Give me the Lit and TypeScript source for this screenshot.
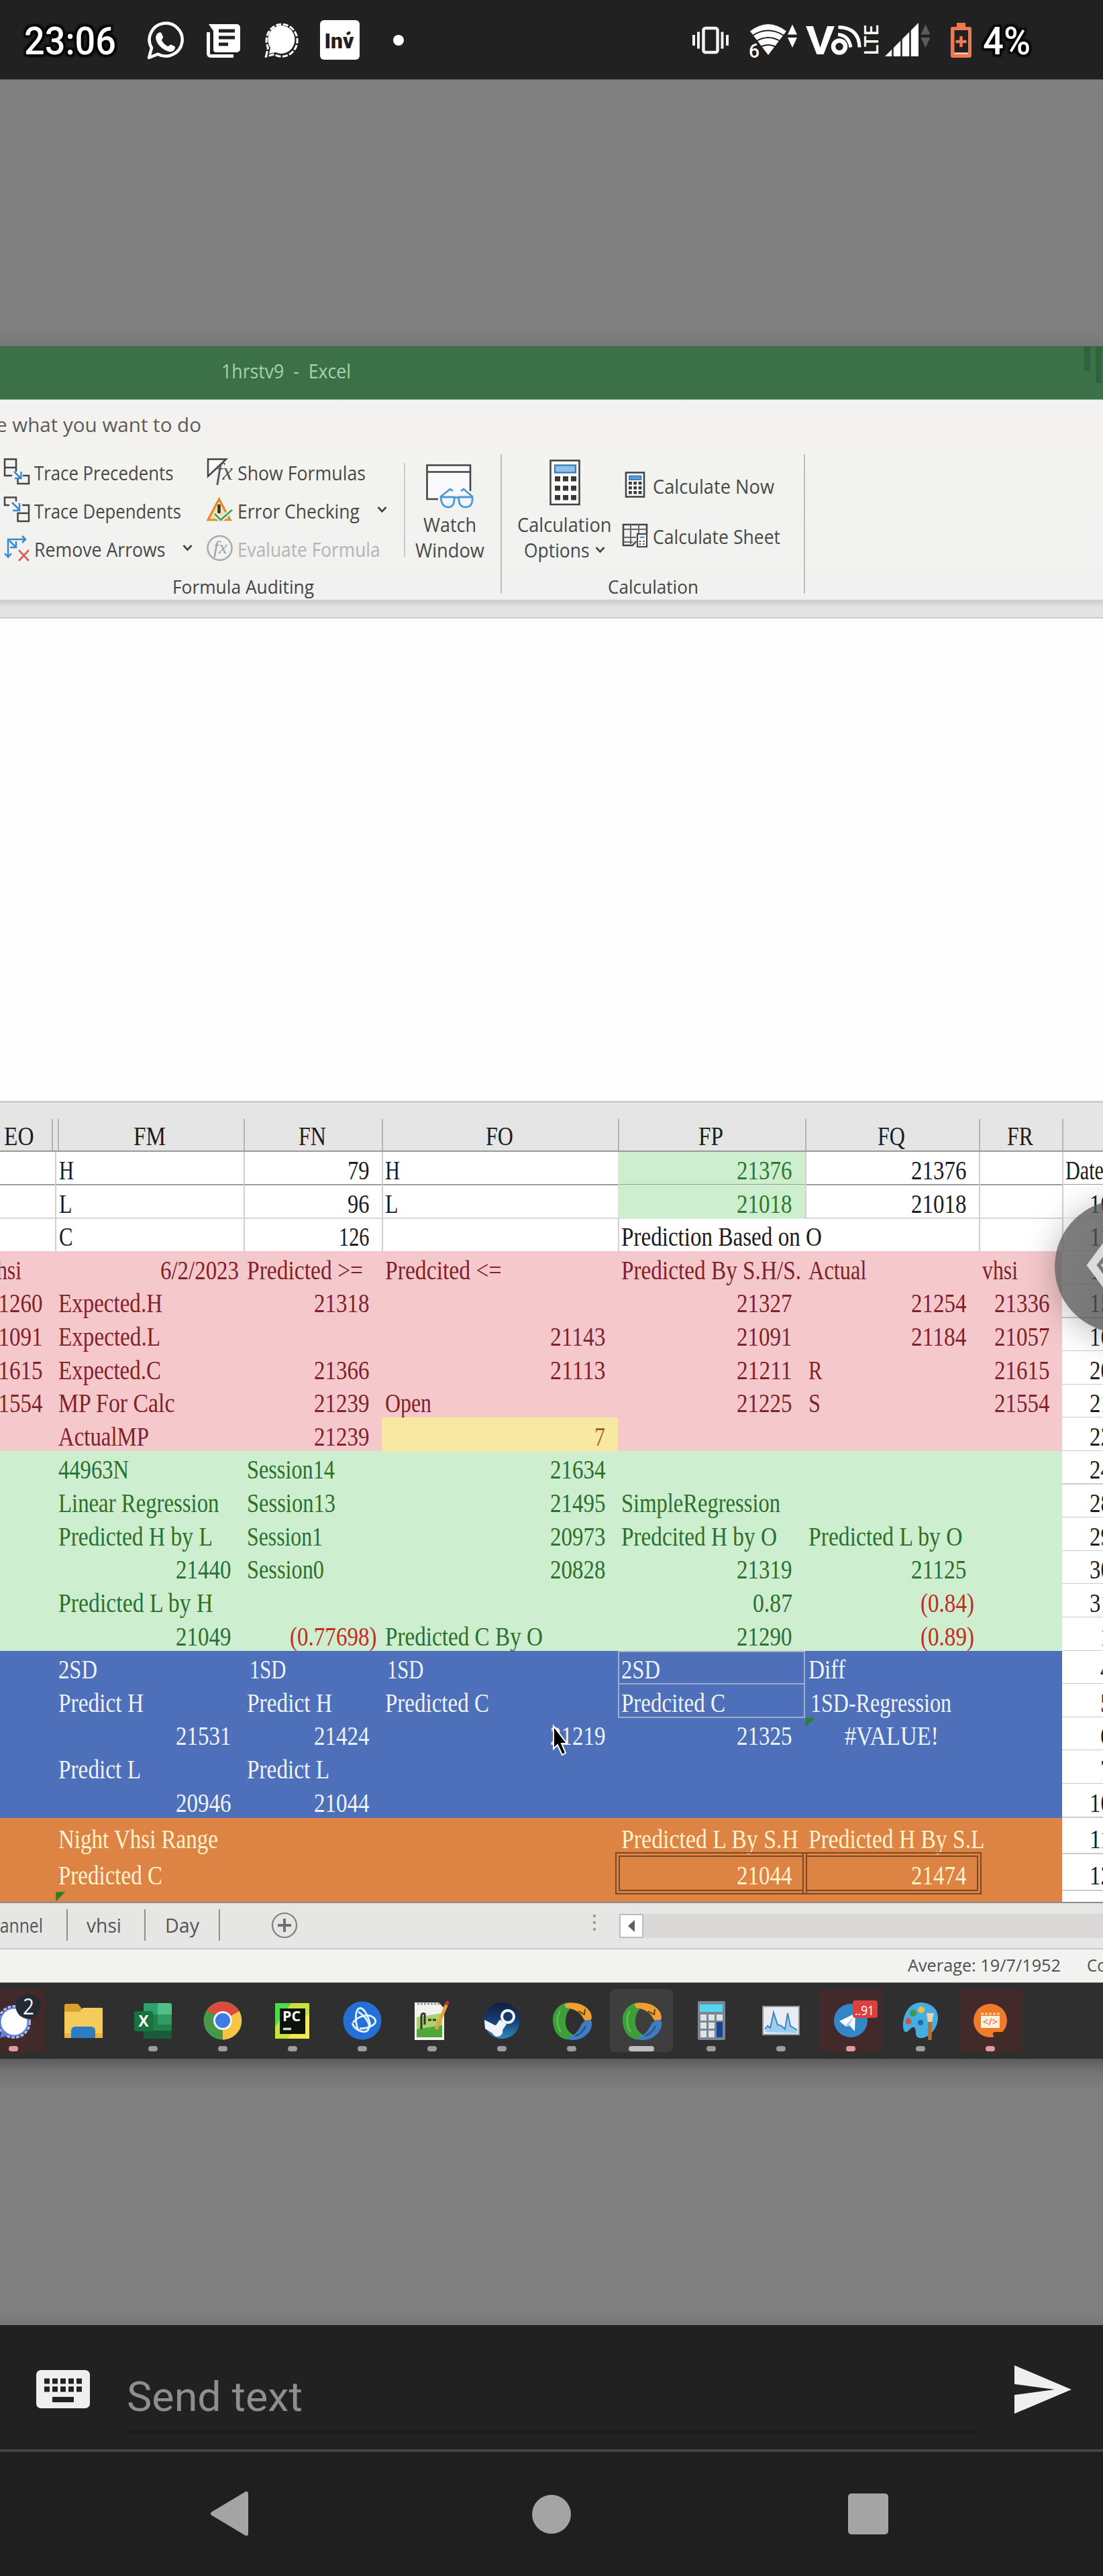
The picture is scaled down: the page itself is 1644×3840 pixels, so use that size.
import { LitElement, html, css, svg, nothing } from "lit";
import { customElement, property } from "lit/decorators.js";
import { classMap } from "lit/directives/class-map.js";

/** A run of text scaled horizontally to an exact width. */
@customElement("fit-text")
class FitText extends LitElement {
  @property() text = "";
  @property({ type: Number }) w = 0;

  static styles = css`
    :host { display: inline-block; flex: none; white-space: pre; }
    span { display: inline-block; transform-origin: 0 50%; }
  `;

  updated() {
    this.style.width = `${this.w}px`;
    const s = this.shadowRoot!.querySelector("span")!;
    s.style.transform = "none";
    const natural = s.getBoundingClientRect().width;
    if (natural) s.style.transform = `scaleX(${this.w / natural})`;
  }

  render() {
    return html`<span>${this.text}</span>`;
  }
}

const t = (text: string, w: number) => html`<fit-text .text=${text} .w=${w}></fit-text>`;

const pic = (x: number, y: number, w: number, h: number, body: unknown) =>
  html`<svg viewBox="${x} ${y} ${w} ${h}" width=${w} height=${h}>${body}</svg>`;

/* ---------- status bar icons ---------- */

const whatsapp = pic(219, 34, 55, 55, svg`
  <path d="M222 86l4-14.500a24.500 24.500 0 1 1 9.500 9.200z" fill="none" stroke="#fff" stroke-width="4.500" stroke-linejoin="round"/>
  <path d="M236 49c2-1.500 4-1 5 1l2 5c.5 2-2 3.500-2 5 2 4 5 7 9 9 2 0 3-3 5-2.500l5 2.500c2 1 1 4-1 6-3 3-7 2.500-11 .5-7-3-13-9-15-15-1.500-4-1-9 3-11.500z" fill="#fff"/>`);
const news = pic(308, 35, 51, 52, svg`
  <path d="M311 36h42a5 5 0 0 1 5 5v32a5 5 0 0 1-5 5h-31a4 4 0 0 1-4-4V46z" fill="#fff"/>
  <path d="M326 46h24M326 56h24M326 66h14" stroke="#212121" stroke-width="5"/>
  <path d="M310.500 48v32a3.500 3.500 0 0 0 3.500 3.500h34" fill="none" stroke="#fff" stroke-width="5"/>`);
const signalChat = pic(394, 35, 52, 52, svg`
  <path d="M401 80l2-9a20 21 0 1 1 8 7z" fill="#fff"/>
  <path d="M396.500 84l3-13a23 24 0 1 1 9 10z" fill="none" stroke="#fff" stroke-width="3" stroke-dasharray="8 2.500"/>`);
const inv = pic(477, 30, 59, 59, svg`
  <rect x="477" y="30" width="59" height="59" rx="6" fill="#fff"/>
  <text x="483.500" y="71.500" font-family="Roboto" font-weight="900" font-size="32" textLength="44" lengthAdjust="spacingAndGlyphs" fill="#212121">Inv</text>
  <path d="M517 51l5-3" stroke="#212121" stroke-width="4"/>`);

const vibrate = pic(1032, 38, 56, 44, svg`
  <rect x="1048.500" y="42" width="21" height="36" rx="3" fill="none" stroke="#f2f2f2" stroke-width="4.500"/>
  <path d="M1034 52v16M1041 47.500v25M1076.500 47.500v25M1084 52v16" stroke="#f2f2f2" stroke-width="4"/>`);
const wifi = pic(1115, 34, 75, 54, svg`
  <path d="M1118 46.500q27-21 54 0L1145 82z" fill="#fff"/>
  <path d="M1120 54q25-17 50 0M1126 62q19-12 38 0M1132 71q13-8 26 0" fill="none" stroke="#212121" stroke-width="2"/>
  <path d="M1115 62h12l8 10v16h-20z" fill="#212121"/>
  <text x="1116" y="86" font-family="Roboto" font-size="29" textLength="16" lengthAdjust="spacingAndGlyphs" fill="#fff">6</text>
  <path d="M1174 51.500l7-15 7 15zM1174 56l7 15 7-15z" fill="#fff"/>`);
const volte = pic(1200, 34, 110, 52, svg`
  <text x="1201" y="81" font-family="Roboto" font-weight="700" font-size="60" textLength="43" lengthAdjust="spacingAndGlyphs" fill="#fff">V</text>
  <ellipse cx="1251" cy="69.500" rx="9" ry="9" fill="none" stroke="#fff" stroke-width="6.500"/>
  <path d="M1249 51.500q16 1 19 19M1249.500 40.500q31 1 31.500 30" fill="none" stroke="#fff" stroke-width="5"/>
  <text transform="translate(1308.500 82) rotate(-90)" font-family="Roboto" font-weight="500" font-size="29" textLength="45" lengthAdjust="spacingAndGlyphs" fill="#fff">LTE</text>`);
const bars = pic(1319, 34, 68, 51, svg`
  <path d="M1319 84L1369 34V84z" fill="#fff"/>
  <path d="M1330.500 34v51M1343.500 34v51M1356.500 34v51" stroke="#212121" stroke-width="2.500"/>
  <path d="M1372.500 51.500l7-15 7 15zM1372.500 56l7 15 7-15z" fill="#5c5c5c"/>`);
const battery = pic(1417, 34, 31, 52, svg`
  <path d="M1426 34h13v6h6a3 3 0 0 1 3 3v40a3 3 0 0 1-3 3h-25a3 3 0 0 1-3-3V43a3 3 0 0 1 3-3h6z" fill="#f0784e"/>
  <rect x="1422.500" y="45" width="20.500" height="33.500" fill="#212121"/>
  <rect x="1422.500" y="78.500" width="20.500" height="2" fill="#f6e0d8"/>
  <path d="M1432.500 54v16M1424.500 62h16" stroke="#f0784e" stroke-width="4.500"/>`);

/* ---------- ribbon icons ---------- */

const K = "#444";
const B = "#3a8ac8";
const precedents = pic(5, 683, 40, 39, svg`
  <path d="M18 709H7V684.500h17V703M7 697h17" fill="none" stroke=${K} stroke-width="2.500"/>
  <path d="M34 709h9v12H26.500v-8" fill="none" stroke=${K} stroke-width="2.500"/>
  <path d="M21 703l9 9M22 713h9.500v-10" fill="none" stroke=${B} stroke-width="2.500"/>`);
const dependents = pic(5, 740, 40, 39, svg`
  <path d="M14 753H7V741.500h17v6" fill="none" stroke=${K} stroke-width="2.500"/>
  <path d="M33 753h10v24H26.500v-12H43" fill="none" stroke=${K} stroke-width="2.500"/>
  <path d="M18 749l11 11M19 761h10v-11" fill="none" stroke=${B} stroke-width="2.500"/>`);
const removeArrows = pic(5, 796, 40, 40, svg`
  <path d="M12 829V803h26M33 798l5 5-5 5M7 824l5 5.500 5-5.500M14 805l10 10M15 815h9v-9" fill="none" stroke=${B} stroke-width="2.500"/>
  <path d="M28 819l15 16M43 819l-15 16" stroke="#d9615c" stroke-width="2.800"/>`);
const showFormulas = pic(308, 682, 40, 41, svg`
  <path d="M337 684.500H310V710z" fill="#fafafa" stroke=${K} stroke-width="2.500"/>
  <text x="322" y="715" font-family="Liberation Serif" font-style="italic" font-size="35" textLength="25" lengthAdjust="spacingAndGlyphs" fill="#555">fx</text>`);
const errorCheck = pic(308, 741, 40, 37, svg`
  <path d="M326.500 744L310 775h33z" fill="#f6dca8" stroke="#e08c28" stroke-width="3.200"/>
  <path d="M326.500 752v13" stroke="#333" stroke-width="4.500"/>
  <path d="M320 766l9 9 17-15" fill="none" stroke="#f1f1ee" stroke-width="7"/>
  <path d="M320 766l9 9 17-15" fill="none" stroke="#46a85a" stroke-width="3"/>`);
const evaluate = pic(308, 796, 40, 40, svg`
  <circle cx="327.500" cy="816" r="18" fill="none" stroke="#aaa" stroke-width="2.500"/>
  <text x="318" y="824" font-family="Liberation Serif" font-style="italic" font-size="27" textLength="21" lengthAdjust="spacingAndGlyphs" fill="#a2a2a2">fx</text>`);
const watch = pic(635, 692, 74, 66, svg`
  <path d="M654 744H637.500V693.500H702V732" fill="#fafafc" stroke=${K} stroke-width="2.600"/>
  <path d="M637.500 703.500H702" stroke=${K} stroke-width="2.600"/>
  <path d="M658 741h20q1 15-9 15t-11-15zM685 741h20q1 15-10 15t-10-15zM678 743q4-3 7 0M657 741l15-12 4 3M706 741l-14-12-4 3" fill="#f4f6f8" stroke="#4a9ad4" stroke-width="2.800"/>`);
const grid9 = (x: number, y: number, dx: number, dy: number, w: number, h: number) =>
  [0, 1, 2].map((r) => [0, 1, 2].map((c) =>
    svg`<rect x=${x + c * dx} y=${y + r * dy} width=${w} height=${h} fill="#383838"/>`));
const calcBig = pic(818, 685, 46, 69, svg`
  <rect x="819.500" y="686.500" width="43" height="65.500" fill="#fdfdfd" stroke=${K} stroke-width="2.600"/>
  <rect x="826" y="693.500" width="31" height="11" fill="#8fc0ec" stroke="#3b78b4" stroke-width="2.200"/>
  ${grid9(826, 710, 12, 14, 8, 7.5)}`);
const calcSmall = pic(927, 702, 40, 39, svg`
  <rect x="933" y="703.500" width="27" height="36" fill="#fdfdfd" stroke=${K} stroke-width="2.600"/>
  <rect x="938" y="708.500" width="17.500" height="5.500" fill="#5aa0dc" stroke="#3b78b4" stroke-width="1.800"/>
  ${grid9(937, 717, 7.3, 7, 4.8, 4.5)}`);
const calcSheet = pic(927, 780, 40, 37, svg`
  <path d="M964 795V782H929v31h14l5-6" fill="none" stroke=${K} stroke-width="2.600"/>
  <path d="M929 789h35M929 801h19M940 782v29M952 782v13M929 808h14" stroke="#666" stroke-width="2"/>
  <rect x="950" y="796" width="14" height="19" fill="#fdfdfd" stroke=${K} stroke-width="2.200"/>
  <path d="M953.500 801h7" stroke="#4a90d0" stroke-width="2.500"/>
  <path d="M954 806v6M959.500 806v6" stroke=${K} stroke-width="2.200" stroke-dasharray="2 2"/>`);
const chev = html`<svg class="chev" viewBox="0 0 15 9" width="15" height="9"><path d="M1.500 1l6 6.500 6-6.500" fill="none" stroke="#444" stroke-width="2.600"/></svg>`;

/* ---------- taskbar icons, 56x60 boxes ---------- */

const box = (body: unknown) => html`<svg viewBox="0 0 56 60" width="56" height="60">${body}</svg>`;
const swirl = box(svg`
  <path d="M27 4C12 3 0 15 0 30s7 26 19 29c5 1 10-1 13-6-9-4-14-12-13-23 1-10 5-16 11-20z" fill="#3f9e3a"/>
  <path d="M17 7c15-7 40 2 41 19 0 7-9 8-12 3-4-9-11-15-26-17z" fill="#f0a033"/>
  <path d="M38 17l9 5 1-8" fill="none" stroke="#5a3c10" stroke-width="2"/>
  <path d="M58 33c2 11-8 23-20 26-8 2-14 1-18-1 12-5 17-10 22-20 3-7 13-11 16-5z" fill="#3f7cc4"/>
  <path d="M49 39c-3 8-10 13-16 15" stroke="#2d5688" stroke-width="2.500" fill="none"/>
  <path d="M11 16c-6 10-6 22 1 32" stroke="#58bb4c" stroke-width="3" fill="none"/>`);

const tasks: { art: unknown; dot?: boolean; note?: boolean; active?: boolean }[] = [
  { note: true, art: box(svg`
    <circle cx="29" cy="33" r="23" fill="none" stroke="#a9bdf2" stroke-width="4" stroke-dasharray="5 2"/>
    <circle cx="29" cy="33" r="22" fill="#5f80e2"/><circle cx="29" cy="33" r="19.500" fill="#fff"/><path d="M8 57l3-14 11 10z" fill="#5f80e2"/>
    <circle cx="50" cy="10" r="18.500" fill="#222a33"/>
    <text x="42" y="22" font-family="Open Sans" font-size="33" textLength="17" lengthAdjust="spacingAndGlyphs" fill="#eee">2</text>`) },
  { dot: false, art: box(svg`
    <path d="M0 9a3 3 0 0 1 3-3h17l6 7v12H0z" fill="#d9a02c"/>
    <path d="M0 18h22l6-6h29v45H0z" fill="#f5cb5b"/><path d="M0 50h57v7H0z" fill="#e8b548"/>
    <path d="M10 57V46a6 6 0 0 1 6-6h24a6 6 0 0 1 6 6v11z" fill="#2d7cc4"/>`) },
  { art: box(svg`
    <rect x="14" y="5" width="42" height="53" rx="3" fill="#22804c"/><path d="M35 5h18a3 3 0 0 1 3 3v14H35z" fill="#50c08a"/>
    <path d="M14 8a3 3 0 0 1 3-3h18v17H14z" fill="#2ea06a"/><path d="M35 22h21v15H35z" fill="#2f9a62"/><path d="M14 46h42v9a3 3 0 0 1-3 3H17a3 3 0 0 1-3-3z" fill="#1a5c38"/>
    <rect x="0" y="17" width="28" height="30" rx="2" fill="#177240"/>
    <text x="6.500" y="40" font-family="Open Sans" font-weight="700" font-size="24" textLength="15" lengthAdjust="spacingAndGlyphs" fill="#fff">X</text>`) },
  { art: box(svg`
    <circle cx="28" cy="31" r="28.500" fill="#46994a"/>
    <path d="M28 31L3.500 17A28.500 28.500 0 0 1 52.500 17z" fill="#dc4b3e"/>
    <path d="M28 31L52.500 17A28.500 28.500 0 0 1 28 59.500z" fill="#f6c544"/><path d="M28 17h24.500l1 2-12 20z" fill="#f6c544"/><path d="M4 16L28 31l24.500-14z" fill="#dc4b3e"/>
    <path d="M4 16l13 24 8-14z" fill="#46994a"/>
    <circle cx="28" cy="31" r="14" fill="#f4f4f4"/><circle cx="28" cy="31" r="11" fill="#3e7be6"/>`) },
  { art: box(svg`
    <rect x="2" y="5" width="51" height="53" fill="#c8e040"/><path d="M2 5h24L2 40z" fill="#4fd84c"/><path d="M53 20v38H20z" fill="#f0ea50"/>
    <rect x="9" y="13" width="38" height="38" fill="#0a120a"/>
    <text x="13" y="32" font-family="Open Sans" font-weight="700" font-size="22" textLength="27" lengthAdjust="spacingAndGlyphs" fill="#fff">PC</text>
    <path d="M14 43.500h12" stroke="#ddd" stroke-width="3.500"/>`) },
  { art: box(svg`
    <circle cx="28" cy="31" r="28.500" fill="#2470d8"/>
    <g fill="none" stroke="#e4f4ff" stroke-width="2.800">
    <path d="M22 46C17 32 17 16 23 13s14 10 17 25"/><path d="M14 34c9-11 25-14 32-6s-8 15-22 15"/><path d="M22 18c10 6 19 18 15 26s-20 2-24-9"/></g>`) },
  { art: box(svg`
    <path d="M2 4h36l8 9v47H2z" fill="#f2f2ee"/><path d="M5 26l38-6v36H5z" fill="#a9d46a"/><path d="M5 44l38-6v18H5z" fill="#50a838"/>
    <path d="M6 6h34" stroke="#999" stroke-width="3" stroke-dasharray="3 2"/>
    <path d="M12 44V24q1-5 5-3v16M22 30h5M29 30h5" stroke="#333" stroke-width="3" fill="none"/>
    <path d="M50 6L34 44" stroke="#e2a340" stroke-width="5"/><path d="M51.500 2l-2 6" stroke="#b03a30" stroke-width="5"/>`) },
  { art: box(svg`
    <defs><linearGradient id="st" x2="0" y2="1"><stop offset="0" stop-color="#10203f"/><stop offset=".5" stop-color="#143e70"/><stop offset="1" stop-color="#2f8cc0"/></linearGradient></defs>
    <circle cx="28" cy="31" r="27" fill="url(#st)"/>
    <circle cx="37" cy="25" r="9" fill="#163a66" stroke="#f0f4f8" stroke-width="4"/>
    <path d="M30 33l-9 13" stroke="#f0f4f8" stroke-width="12"/><path d="M2 30l18 9a8 8 0 1 1-6 11L3 43z" fill="#f0f4f8"/>`) },
  { art: swirl },
  { active: true, art: swirl },
  { art: box(svg`
    <rect x="8" y="2" width="41" height="58" rx="2" fill="#7b8691"/><rect x="11" y="7" width="34" height="11" fill="#55d4f6"/>
    <path d="M12 22h9v9h-9zM24 22h9v9h-9zM36 22h9v9h-9zM12 34h9v9h-9zM24 34h9v9h-9zM12 46h9v10h-9zM24 46h9v10h-9z" fill="#dde2e8"/>
    <path d="M36 33h9v23h-9z" fill="#16478c"/>`) },
  { art: box(svg`
    <rect x="1" y="10" width="54" height="42" fill="#e9edf2" stroke="#8e979f" stroke-width="2"/>
    <path d="M4 48l4-9 4 3 5-23 6 18 6 2 5 5 4-24 4 19 10 6v5z" fill="#9fcdf0"/>
    <path d="M4 44l4-5 4 3 5-23 6 18 6 2 5 5 4-24 4 19 10 6" fill="none" stroke="#3d84c4" stroke-width="2"/>`) },
  { note: true, art: box(svg`
    <circle cx="28" cy="31" r="25" fill="#3387c6"/><path d="M11 32l24-12-1 27-8-9-5 2z" fill="#fff"/><path d="M20 38l14-14-9 16z" fill="#b8d4ea"/>
    <rect x="31" y="1" width="37" height="26" rx="4" fill="#de3f3c"/>
    <text x="34" y="23" font-family="Open Sans" font-size="20" textLength="29" lengthAdjust="spacingAndGlyphs" fill="#fff">..91</text>`) },
  { art: box(svg`
    <path d="M30 4C13 3 2 20 2 37c0 12 4 13 8 9s8-8 10-3-1 12 6 14c10 2 28-10 28-31C54 13 43 5 30 4z" fill="#46ace2"/>
    <circle cx="17" cy="20" r="5" fill="#3c9a48"/><circle cx="29" cy="15" r="5" fill="#e8c23a"/><circle cx="10" cy="32" r="4.500" fill="#d8502c"/><circle cx="28" cy="34" r="4" fill="#1b6ea8"/>
    <path d="M42 30v30" stroke="#b0702c" stroke-width="5.500"/><path d="M37 20h11l-3 13h-6z" fill="#e6d4ae"/>`) },
  { note: true, art: box(svg`
    <circle cx="28" cy="31" r="25" fill="#ee7c2b"/><path d="M14 21h28" stroke="#f8c79a" stroke-width="3" stroke-dasharray="4 2"/>
    <rect x="14" y="24" width="28" height="18" fill="#fdeedd"/>
    <text x="17" y="38" font-family="Open Sans" font-size="14" textLength="22" lengthAdjust="spacingAndGlyphs" fill="#c8641e">&lt;/&gt;</text>
    <rect x="32" y="48" width="18" height="7" rx="3" fill="#4a2c1a"/>`) },
];

/* ---------- worksheet data ---------- */

type Cell = null | { s?: string; w?: number; a?: "r" | "l" | "c"; k?: string; tri?: boolean };
const L = (s: string, w: number, k = ""): Cell => ({ s, w, a: "l", k });
const R = (s: string, w = 82.5, k = ""): Cell => ({ s, w, a: "r", k });
const N = (s: string, w: number): Cell => R(s, w, "neg");
const D = (s: string): Cell => R(s, s.length * 16.4, "date");
const _ = null;

const rows: { tone: string; cells: Cell[] }[] = [
  { tone: "plain frozen", cells: [_, L("H", 22), R("79", 32.5), L("H", 22), R("21376", 82.5, "good"), R("21376"), _, L("Date", 57, "date")] },
  { tone: "plain", cells: [_, L("L", 19.5), R("96", 32.5), L("L", 19.5), R("21018", 82.5, "good"), R("21018"), _, D("10")] },
  { tone: "plain last", cells: [_, L("C", 20.5), R("126", 45.5), _, L("Prediction Based on O", 299, "spill"), _, _, D("11")] },
  { tone: "pink", cells: [L("vhsi", 53, "cut"), R("6/2/2023", 117, "wide"), L("Predicted >=", 173), L("Predcited <=", 173.5), L("Predicted By S.H/S.", 268), L("Actual", 86.5), L("vhsi", 53), D("14")] },
  { tone: "pink", cells: [R("21260"), L("Expected.H", 155), R("21318"), _, R("21327"), R("21254"), R("21336"), D("15")] },
  { tone: "pink", cells: [R("21091"), L("Expected.L", 152), _, R("21143"), R("21091"), R("21184"), R("21057"), D("16")] },
  { tone: "pink", cells: [R("21615"), L("Expected.C", 153), R("21366"), R("21113"), R("21211"), L("R", 20.5), R("21615"), D("20")] },
  { tone: "pink", cells: [R("21554"), L("MP For Calc", 173.5), R("21239"), L("Open", 69), R("21225"), L("S", 18), R("21554"), D("21")] },
  { tone: "pink", cells: [_, L("ActualMP", 135), R("21239"), R("7", 16, "amber"), _, _, _, D("22")] },
  { tone: "green", cells: [_, L("44963N", 105), L("Session14", 131), R("21634"), _, _, _, D("24")] },
  { tone: "green", cells: [_, L("Linear Regression", 239.5), L("Session13", 132), R("21495"), L("SimpleRegression", 237), _, _, D("28")] },
  { tone: "green", cells: [_, L("Predicted H by L", 230), L("Session1", 113), R("20973"), L("Predcited H by O", 232), L("Predicted L by O", 229.5), _, D("29")] },
  { tone: "green", cells: [_, R("21440"), L("Session0", 115), R("20828"), R("21319"), R("21125"), _, D("30")] },
  { tone: "green", cells: [_, L("Predicted L by H", 230.5), _, _, R("0.87", 59), N("(0.84)", 80), _, D("31")] },
  { tone: "green", cells: [_, R("21049"), N("(0.77698)", 129.5), L("Predicted C By O", 235), R("21290"), N("(0.89)", 80), _, D("1")] },
  { tone: "blue", cells: [_, L("2SD", 58), L("1SD", 54.5, "ind"), L("1SD", 54.5, "ind"), L("2SD", 58, "boxed"), L("Diff", 55), _, D("4")] },
  { tone: "blue", cells: [_, L("Predict H", 127), L("Predict H", 127), L("Predicted C", 155), L("Predcited C", 155, "boxed b2"), L("1SD-Regression", 210, "ind"), _, D("5")] },
  { tone: "blue", cells: [_, R("21531"), R("21424"), R("21219"), R("21325"), { s: "#VALUE!", w: 140, a: "c", tri: true }, _, D("6")] },
  { tone: "blue", cells: [_, L("Predict L", 123), L("Predict L", 123), _, _, _, _, D("7")] },
  { tone: "blue tallish", cells: [_, R("20946"), R("21044"), _, _, _, _, D("10")] },
  { tone: "orange", cells: [_, L("Night Vhsi Range", 238), _, _, L("Predicted L By S.H", 264), L("Predicted H By S.L", 262.5), _, D("11")] },
  { tone: "orange", cells: [_, L("Predicted C", 155), _, _, R("21044", 82.5, "dbl"), R("21474", 82.5, "dbl"), _, D("12")] },
  { tone: "orange stub", cells: [_, { tri: true }, _, _, _, _, _, _] },
];

const heads: [string, number][] = [["EO", 44.5], ["FM", 48], ["FN", 41], ["FO", 41], ["FP", 37], ["FQ", 41], ["FR", 39], ["", 0]];

@customElement("app-root")
class AppRoot extends LitElement {
  static styles = css`
    :host { display: block; width: 1644px; height: 3840px; overflow: hidden; position: relative; background: #808080;
      font-family: "Open Sans", "Noto Sans", sans-serif; color: #484848; }
    * { box-sizing: border-box; }
    svg { display: block; flex: none; overflow: visible; text-shadow: none; }
    .page { display: flex; flex-direction: column; height: 3840px; }

    .status { height: 118px; background: #212121; display: flex; align-items: flex-start; padding: 0 0 0 36px; flex: none;
      font: 500 56.5px/56px Roboto, sans-serif; color: #fff;
      text-shadow: 0 0 3px #000, 3px 3px 3px #000, -3px -3px 3px #000, 3px -3px 3px #000, -3px 3px 3px #000; }
    .status .clock { margin-top: 34px; }
    .status .i1 { margin: 34px 0 0 46px; } .status .i2 { margin: 35px 0 0 34px; }
    .status .i3 { margin: 35px 0 0 35px; } .status .i4 { margin: 30px 0 0 31px; }
    .status .dot { width: 16px; height: 16px; border-radius: 50%; background: #fff; margin: 52px 0 0 50px; }
    .status .i5 { margin: 38px 0 0 430px; } .status .i6 { margin: 34px 0 0 27px; }
    .status .i7 { margin: 34px 0 0 10px; } .status .i8 { margin: 34px 0 0 9px; }
    .status .i9 { margin: 34px 0 0 30px; } .status .pct { margin: 34px 0 0 17px; }

    .void1 { height: 398px; flex: none; border-top: 1px solid #555; background: linear-gradient(#808080 93%, #787878); }

    .title { height: 80px; flex: none; background: #3c7147; border-bottom: 1px solid #7fae8a; display: flex; color: #a3d3b0;
      font-size: 29px; line-height: 74px; padding-left: 330px; }
    .title .marks { display: flex; gap: 8px; margin-left: auto; padding-right: 2px; }
    .title .marks i { width: 9px; background: #2f6340; height: 37px; }
    .title .marks i + i { height: 55px; }
    .tell { height: 78px; flex: none; background: linear-gradient(#f3f3f5, #f3f2ee 24px); font-size: 30px; line-height: 73px; color: #5c5c5c; overflow: hidden; }
    .tell fit-text { margin-left: -6px; }
    .ribbon { height: 220px; flex: none; background: linear-gradient(#f3f3ef, #f1f1f1); display: flex; font-size: 29.5px; }
    .group { display: flex; flex-direction: column; }
    .group.g1 { width: 745.500px; } .group.g2 { width: 450px; }
    .tools { display: flex; height: 171px; }
    .glabel { font-size: 27px; line-height: 30px; padding-top: 15px; color: #444; }
    .g1 .glabel { padding-left: 257px; } .g2 .glabel { padding-left: 158px; }
    .stack { display: flex; flex-direction: column; }
    .s1 { padding-left: 5px; width: 308px; } .s2 { width: 293.500px; }
    .tool { height: 57px; display: flex; align-items: center; }
    .tool fit-text { line-height: 57px; margin: 1.500px 0 -1.500px 6px; }
    .tool .chev { margin-left: 25px; }
    .s2 .tool .chev { margin-left: 26px; }
    .tool.off { color: #b4b4b4; }
    .s3 { padding-top: 11px; }
    .s3 .tool { height: 75.600px; }
    .vsep { width: 2px; flex: none; background: #cbcbc8; }
    .vsep.short { height: 140px; margin-top: 16px; }
    .vsep.tall { height: 208px; margin-top: 3px; background: #bdbdbb; }
    .big { display: flex; flex-direction: column; align-items: center; line-height: 37.700px; height: 171px; }
    .big.watch { width: 134px; padding-top: 18px; } .big.calc { width: 179px; padding: 11px 0 0 9px; }
    .big svg + fit-text { margin-top: 5px; }
    .big.calc svg + fit-text { margin-top: 9px; }
    .big div { display: flex; align-items: center; gap: 8px; }
    .fbar { height: 28px; flex: none; background: linear-gradient(#cbcbcb, #e2e2e2 11px, #e5e5e5); border-bottom: 2px solid #cccccc; }
    .blank { height: 719px; flex: none; background: #fdfdfd; }

    .sheet { height: 1196px; flex: none; overflow: hidden; position: relative; background: #fff;
      font: 39px/44px "Liberation Serif", serif; color: #1c1c1c; border-top: 3px solid #cfcfcf; border-bottom: 2px solid #8c8c8c; }
    .row, .heads { display: grid; grid-template-columns: 82.300px 281px 205.500px 352px 278.900px 259.500px 123.700px 92.300px; width: 1676px; }
    .heads { height: 72.500px; background: #e5e5e5; border-bottom: 2px solid #999; padding-top: 24px; }
    .heads div { text-align: center; line-height: 51px; height: 47px; padding-right: 3px; border-left: 2px solid #b4b4b4; }
    .heads div:first-child { border-left: 0; border-right: 2px solid #b4b4b4; margin-right: 3px; display: flex; justify-content: flex-end; padding-right: 27px; }
    .heads div:nth-child(2) { margin-left: 4px; padding-right: 5px; }
    .row { height: 49.620px; }
    .cell { display: flex; align-items: flex-start; padding: 3.500px 5px 0; min-width: 0; position: relative; line-height: 49.620px; white-space: nowrap; }
    .cell fit-text { height: 45px; }
    .cell.r { justify-content: flex-end; padding-right: 18.800px; }
    .cell.c { justify-content: center; }
    .cell.wide, .cell.neg { padding-right: 7px; }
    .cell.cut { padding-left: 0; justify-content: flex-end; padding-right: 50px; }
    .cell.ind { padding-left: 8.500px; }
    .cell:last-child { background: #fff; border-bottom: 2px solid #cbcbcb; color: #1c1c1c; }
    .plain .cell { border-left: 2px solid #d0d0d0; border-bottom: 2px solid #d6d6d6; padding-left: 3.500px; }
    .plain .cell:first-child { border-left: 0; }
    .frozen .cell, .frozen .cell:last-child { border-bottom: 2px solid #9b9b9b; }
    .plain.last .cell:not(:last-child) { border-bottom: 0; }
    .plain.last .spill + .cell { border-left-color: transparent; }
    .spill { z-index: 1; }
    .cell.good { background: #cdeecf; color: #2c7a2c; border-left-color: #cdeecf; }
    .row:not(.frozen) .cell.good { border-bottom-color: #cdeecf; }
    .pink { background: #f5c9cc; color: #80222a; }
    .green { background: #cdeecf; color: #2c702c; }
    .blue { background: #4e70bb; color: #eef3f3; }
    .orange { background: #dd8344; color: #fdf3cf; height: 54.800px; }
    .orange .cell { line-height: 54.800px; padding-top: 5px; }
    .row.tallish { height: 50.600px; }
    .row.stub { height: 30px; }
    .cell.amber { background: #f9e8a2; color: #a0651c; }
    .cell.neg { color: #c8281e; }
    .cell.boxed { border: 2px solid #a4acc4; padding: 1.500px 3px 0; }
    .cell.b2 { border-top: 1px solid #a4acc4; padding-top: 2.500px; }
    .cell.dbl::after { content: ""; position: absolute; inset: -3.500px -3.500px -4.500px -3.500px; border: 7px double #7b4a24; }
    .cell.tri::before { content: ""; position: absolute; left: 1px; top: 1px; width: 14px; height: 14px; background: #2c7f22; clip-path: polygon(0 0, 100% 0, 0 100%); }
    .cursor { position: absolute; left: 823px; top: 928px; }
    .bubble { position: absolute; left: 1572px; top: 145px; width: 198px; height: 198px; border-radius: 50%;
      background: linear-gradient(100deg, rgba(92,92,92,.78), rgba(60,60,60,.76)); box-shadow: 0 6px 50px rgba(0,0,0,.28); }
    .bubble svg { position: absolute; left: 46px; top: 60px; }

    .tabs { height: 69px; flex: none; background: #e6e6e5; border-bottom: 2px solid #c9c9c9; display: flex; align-items: flex-start; font-size: 29px; line-height: 65px; color: #555; }
    .tabs .ch { margin-left: -31px; width: 130px; } .tabs .vh { width: 115.500px; padding-left: 30px; } .tabs .dy { width: 111.500px; padding-left: 31px; }
    .tabs .vsep { height: 47px; margin-top: 9px; background: #8f8f8f; margin-right: -2px; }
    .tabs .plus { margin: 13px 0 0 78px; }
    .tabs .dots { margin: 17px 0 0 440px; }
    .tabs .arrow { margin: 16px 0 0 35px; width: 36px; height: 36px; border: 2px solid #bdbdbd; background: #fff; display: grid; place-items: center; }
    .tabs .track { margin-top: 16px; height: 36px; flex: 1; background: #dad9d8; }
    .sum { height: 50px; flex: none; background: #f2f2f0; border-bottom: 1px solid #777; font-size: 25.500px; line-height: 46px; padding-left: 1353px; display: flex; gap: 39px; overflow: hidden; color: #505050; }
    .task { height: 113px; flex: none; background: #302f2f; display: flex; gap: 10px; overflow: hidden; }
    .app { width: 94px; height: 94px; margin-top: 9px; flex: none; display: flex; flex-direction: column; align-items: center; padding-top: 16px; border-radius: 8px; }
    .app:first-child { margin-left: -27px; }
    .app.note { background: #42292a; border-radius: 2px; }
    .app.active { background: #3e3e3e; }
    .app i { width: 14px; height: 8px; border-radius: 4px; background: #9c9c9c; margin-top: 9px; }
    .app.note i { background: #e698a0; }
    .app.active i { width: 38px; background: #bdbdbd; }
    .app.nodot i { visibility: hidden; }

    .void2 { height: 397px; flex: none; background: linear-gradient(#5c5c5c, #747474 20px, #808080 50px, #808080 375px, #777); }
    .send { height: 189px; flex: none; background: #212121; border-bottom: 4px solid #444; display: flex; align-items: flex-start; font: 61.500px/72px Roboto, sans-serif; color: #8e8e8e; padding-left: 54px; }
    .send .kb { margin-top: 67px; }
    .send .field { width: 1268px; height: 162px; margin: 0 0 0 55px; border-bottom: 4px solid #1b1b1b; padding: 71px 0 0 0; }
    .send .go { margin: 60px 0 0 55px; }
    .nav { height: 185px; flex: none; background: #1f1f1f; display: flex; align-items: flex-start; padding: 58px 0 0 313px; }
    .nav .home { width: 58px; height: 58px; border-radius: 50%; background: #a4a4a4; margin: 6px 0 0 422px; }
    .nav .recent { width: 60px; height: 61px; border-radius: 5px; background: #a4a4a4; margin: 4px 0 0 413px; }
  `;

  private cell(c: Cell) {
    const cls: Record<string, boolean> = { cell: true };
    if (c?.a) cls[c.a] = true;
    if (c?.tri) cls.tri = true;
    for (const k of (c?.k ?? "").split(" ")) if (k) cls[k] = true;
    return html`<div class=${classMap(cls)}>${c?.s ? t(c.s, c.w!) : nothing}</div>`;
  }

  render() {
    return html`
      <div class="page">
        <div class="status">
          <div class="clock">${t("23:06", 137)}</div>
          <div class="i1">${whatsapp}</div><div class="i2">${news}</div><div class="i3">${signalChat}</div><div class="i4">${inv}</div>
          <div class="dot"></div>
          <div class="i5">${vibrate}</div><div class="i6">${wifi}</div><div class="i7">${volte}</div><div class="i8">${bars}</div><div class="i9">${battery}</div>
          <div class="pct">${t("4%", 71)}</div>
        </div>
        <div class="void1"></div>

        <div class="title">${t("1hrstv9  -  Excel", 193)}<div class="marks"><i></i><i></i></div></div>
        <div class="tell">${t("e what you want to do", 306)}</div>
        <div class="ribbon">
          <div class="group g1">
            <div class="tools">
              <div class="stack s1">
                <div class="tool">${precedents}${t("Trace Precedents", 207.5)}</div>
                <div class="tool">${dependents}${t("Trace Dependents", 219)}</div>
                <div class="tool">${removeArrows}${t("Remove Arrows", 195.5)}${chev}</div>
              </div>
              <div class="stack s2">
                <div class="tool">${showFormulas}${t("Show Formulas", 191)}</div>
                <div class="tool">${errorCheck}${t("Error Checking", 182)}${chev}</div>
                <div class="tool off">${evaluate}${t("Evaluate Formula", 212.5)}</div>
              </div>
              <div class="vsep short"></div>
              <div class="big watch">${watch}${t("Watch", 79)}${t("Window", 103)}</div>
            </div>
            <div class="glabel">${t("Formula Auditing", 211)}</div>
          </div>
          <div class="vsep tall"></div>
          <div class="group g2">
            <div class="tools">
              <div class="big calc">${calcBig}${t("Calculation", 140.5)}<div>${t("Options", 97.5)}${chev}</div></div>
              <div class="stack s3">
                <div class="tool">${calcSmall}${t("Calculate Now", 181)}</div>
                <div class="tool">${calcSheet}${t("Calculate Sheet", 190)}</div>
              </div>
            </div>
            <div class="glabel">${t("Calculation", 135)}</div>
          </div>
          <div class="vsep tall"></div>
        </div>
        <div class="fbar"></div>
        <div class="blank"></div>

        <div class="sheet">
          <div class="heads">${heads.map(([s, w]) => html`<div>${s ? t(s, w) : nothing}</div>`)}</div>
          ${rows.map((r) => html`<div class="row ${r.tone}">${r.cells.map((c) => this.cell(c))}</div>`)}
          <div class="cursor"><svg viewBox="0 0 24 46" width="24" height="46"><path d="M2 1v34l6-6 7 15 5-3-6-14h8z" fill="#000" stroke="#fff" stroke-width="2"/></svg></div>
          <div class="bubble"><svg viewBox="0 0 60 76" width="60" height="76"><path d="M32 6L9 37l23 31M54 12L31 37l23 25" fill="none" stroke="#dcdcdc" stroke-width="12"/></svg></div>
        </div>

        <div class="tabs">
          <div class="ch">${t("Channel", 95)}</div><div class="vsep"></div>
          <div class="vh">${t("vhsi", 52)}</div><div class="vsep"></div>
          <div class="dy">${t("Day", 51)}</div><div class="vsep"></div>
          <div class="plus"><svg viewBox="0 0 40 40" width="40" height="40"><circle cx="20" cy="20" r="18" fill="none" stroke="#808080" stroke-width="2.200"/><path d="M20 10v20M10 20h20" stroke="#707070" stroke-width="4"/></svg></div>
          <div class="dots"><svg viewBox="0 0 4 26" width="4" height="26"><path d="M0 0h4v4H0zM0 10h4v4H0zM0 20h4v4H0z" fill="#a0a0a0"/></svg></div>
          <div class="arrow"><svg viewBox="0 0 10 18" width="10" height="18"><path d="M10 0v18L0 9z" fill="#606060"/></svg></div>
          <div class="track"></div>
        </div>
        <div class="sum">${t("Average: 19/7/1952", 228)}${t("Count: 20", 108)}</div>
        <div class="task">
          ${tasks.map((a) => html`<div class=${classMap({ app: true, note: !!a.note, active: !!a.active, nodot: a.dot === false })}>${a.art}<i></i></div>`)}
        </div>
        <div class="void2"></div>

        <div class="send">
          <div class="kb"><svg viewBox="0 0 80 57" width="80" height="57"><rect width="80" height="57" rx="7" fill="#efefef"/>
            <path d="M12 16.500h58M12 28.500h58" stroke="#212121" stroke-width="8" stroke-dasharray="8 4"/><path d="M24 44h32" stroke="#212121" stroke-width="8"/></svg></div>
          <div class="field">${t("Send text", 262)}</div>
          <div class="go"><svg viewBox="0 0 85 72" width="85" height="72"><path d="M0 0l85 36L0 72V44l60-8L0 28z" fill="#efefef"/></svg></div>
        </div>
        <div class="nav">
          <svg viewBox="0 0 58 68" width="58" height="68"><path d="M54 4v60L4 34z" fill="#a4a4a4" stroke="#a4a4a4" stroke-width="6" stroke-linejoin="round"/></svg>
          <div class="home"></div><div class="recent"></div>
        </div>
      </div>`;
  }
}
